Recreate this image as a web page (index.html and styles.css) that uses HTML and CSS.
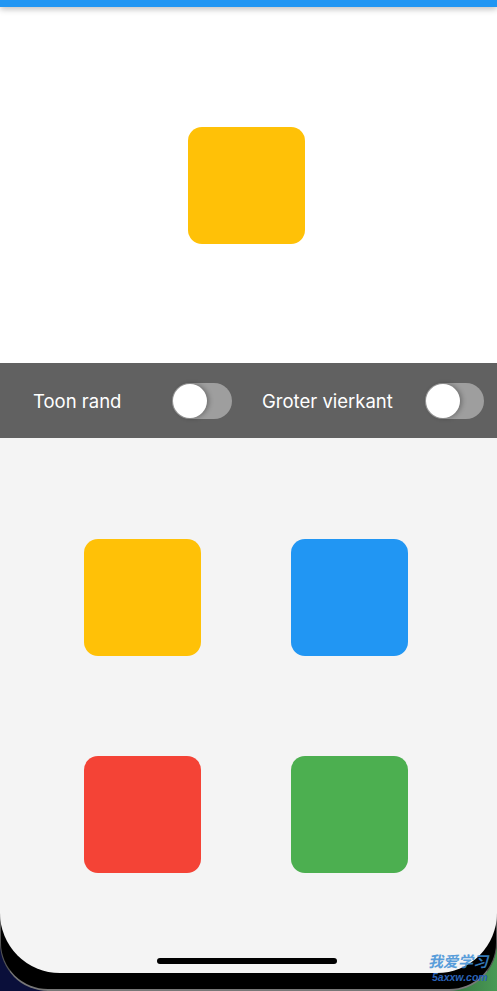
FILE: index.html
```html
<!DOCTYPE html>
<html lang="nl">
<head>
<meta charset="utf-8">
<title>Vierkanten</title>
<link rel="stylesheet" href="styles.css">
</head>
<body>
<div class="phone">
  <div class="screen">
    <div class="topbar"></div>
    <div class="preview">
      <div class="square yellow"></div>
    </div>
    <div class="controls">
      <span class="label label-1">Toon rand</span>
      <span class="switch"><span class="thumb"></span></span>
      <span class="label label-2">Groter vierkant</span>
      <span class="switch switch-2"><span class="thumb"></span></span>
    </div>
    <div class="lower">
      <div class="grid">
        <div class="square yellow"></div>
        <div class="square blue"></div>
        <div class="square red"></div>
        <div class="square green"></div>
      </div>
      <div class="home"></div>
    </div>
  </div>
  <div class="watermark"><span class="wm-cn">我爱学习</span><span class="wm-en">5axxw.com</span></div>
</div>
</body>
</html>
```

FILE: styles.css
```css
* { box-sizing: border-box; }
html, body {
  margin: 0;
  padding: 0;
  width: 497px;
  height: 991px;
  overflow: hidden;
  background: #000;
  font-family: Inter, "Noto Sans", "Liberation Sans", sans-serif;
}
.phone {
  position: relative;
  width: 497px;
  height: 991px;
  background: linear-gradient(to right, #0a0f3a 0, #0a0f3a 30%, #1d4a2c 80%, #4a9a55 100%);
}
.phone::before {
  content: "";
  position: absolute;
  left: 0;
  right: 0;
  bottom: 0;
  height: 120px;
  background: #000;
  border-radius: 0 0 48px 48px;
  border-bottom: 2px solid #777;
  border-left: 1px solid #555;
  border-right: 1px solid #555;
}
.screen {
  position: relative;
  height: 973px;
  background: #f4f4f4;
  border-radius: 0 0 60px 60px;
  display: flex;
  flex-direction: column;
  overflow: hidden;
}
.topbar {
  height: 7px;
  background: #2196f3;
  box-shadow: 0 2px 6px rgba(0,0,0,0.28);
  position: relative;
  z-index: 1;
}
.preview {
  height: 356px;
  background: #fff;
  display: flex;
  align-items: center;
  justify-content: flex-start;
  padding-left: 188px;
}
.square {
  width: 117px;
  height: 117px;
  border-radius: 14px;
}
.yellow { background: #ffc107; }
.blue { background: #2196f3; }
.red { background: #f44336; }
.green { background: #4caf50; }
.controls {
  height: 75px;
  background: #616161;
  display: flex;
  align-items: center;
  padding-left: 33px;
  color: #fff;
  font-size: 18.5px;
}
.label { display: inline-block; }
.label-1 { width: 139px; }
.label-2 { width: 163px; margin-left: 30px; }
.switch {
  width: 60px;
  height: 36px;
  border-radius: 18px;
  background: #9e9e9e;
  display: flex;
  align-items: center;
  padding-left: 1px;
}
.switch-2 { width: 59px; }
.thumb {
  width: 34px;
  height: 34px;
  border-radius: 50%;
  background: #fff;
  box-shadow: 2px 0 5px rgba(0,0,0,0.3);
}
.lower {
  flex: 1;
  display: flex;
  flex-direction: column;
  align-items: flex-start;
}
.grid {
  display: grid;
  grid-template-columns: 117px 117px;
  column-gap: 90px;
  row-gap: 100px;
  padding: 101px 0 0 84px;
}
.home {
  margin-top: auto;
  margin-bottom: 9px;
  align-self: center;
  width: 180px;
  height: 6px;
  border-radius: 3px;
  background: #000;
  margin-left: -4px;
}
.watermark {
  position: absolute;
  left: 420px;
  top: 952px;
  width: 68px;
  display: flex;
  flex-direction: column;
  align-items: flex-start;
  line-height: 1;
  font-style: italic;
  font-weight: 700;
}
.wm-cn {
  font-family: "Noto Sans CJK SC", sans-serif;
  font-size: 15px;
  line-height: 17px;
  color: #3d8fd6;
  opacity: 0.85;
  margin-left: 8px;
}
.wm-en {
  font-family: "Liberation Sans", sans-serif;
  font-size: 10.5px;
  line-height: 12px;
  color: #2a63b8;
  margin-top: 2px;
  margin-left: 12px;
}
```
